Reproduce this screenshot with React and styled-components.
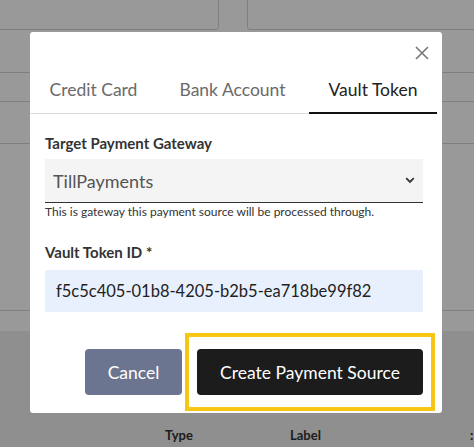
import React from 'react'
import styled, { createGlobalStyle } from 'styled-components'

const GlobalStyle = createGlobalStyle`
  html, body {
    margin: 0;
    padding: 0;
    background: #fff;
    font-family: Lato, "Open Sans", sans-serif;
    overflow: hidden;
  }
`

// Page behind the dialog
const Page = styled.div`
  position: relative;
  width: 474px;
  height: 447px;
  overflow: hidden;
  background: #fff;
`

const FieldRow = styled.div`
  display: grid;
  grid-template-columns: 229px 243px;
  gap: 28px;
  margin: -10px 0 0 -10px;
`

const GhostInput = styled.div`
  height: 38px;
  border: 1px solid #d4d4d4;
  border-radius: 3px;
`

const Line = styled.div`
  height: ${p => p.h}px;
  border-bottom: 1px solid #d6d6d6;
  box-sizing: border-box;
`

const HeaderBand = styled.div`
  margin-top: 20px;
  height: 200px;
  background: #eeeeee;
  display: flex;
  padding-top: 96px;
  box-sizing: border-box;
  font-size: 13px;
  font-weight: 700;
  color: #333;
`

const HeadCell = styled.span`
  width: ${p => p.w}px;
  flex: none;
`

const Overlay = styled.div`
  position: absolute;
  inset: 0;
  background: rgba(0, 0, 0, 0.4);
`

const Modal = styled.div`
  position: absolute;
  left: 30px;
  top: 32px;
  width: 412px;
  height: 381px;
  background: #fff;
  border-radius: 3px;
  display: flex;
  flex-direction: column;
`

const CloseRow = styled.div`
  height: 42px;
  display: flex;
  justify-content: flex-end;
  align-items: center;
  padding: 0 12px 0 0;
`

const CloseBtn = styled.button`
  border: 0;
  background: none;
  padding: 0;
  width: 16px;
  height: 16px;
  display: flex;
  align-items: center;
  justify-content: center;
  svg { display: block; }
`

const TabList = styled.div`
  display: flex;
  gap: 1px;
  margin-right: 5px;
  border-bottom: 1px solid #dcdcdc;
`

const Tab = styled.div`
  flex: none;
  width: ${p => p.w}px;
  text-align: center;
  white-space: nowrap;
  padding: 4px 0 10px;
  line-height: 24px;
  font-size: 17.5px;
  color: ${p => (p.active ? '#222' : '#6a6a6a')};
  border-bottom: ${p => (p.active ? '2px solid #111' : '2px solid transparent')};
  margin-bottom: -1px;
  margin-left: ${p => (p.push ? 'auto' : '0')};
`

const Form = styled.div`
  padding: 18px 19px 0 15px;
  display: flex;
  flex-direction: column;
`

const Label = styled.label`
  font-size: 15px;
  font-weight: 700;
  color: #333;
  line-height: 22px;
  margin: ${p => p.m || '0'};
`

const Select = styled.div`
  height: 44px;
  box-sizing: border-box;
  background: #f4f4f4;
  border-bottom: 1px solid #333;
  display: flex;
  align-items: center;
  justify-content: space-between;
  padding: 0 8px 0 8px;
  font-size: 18px;
  color: #555;
`

const Help = styled.div`
  font-size: 12px;
  line-height: 18px;
  color: #333;
`

const Input = styled.div`
  height: 42px;
  background: #e8f0fe;
  display: flex;
  align-items: center;
  padding-left: 11px;
  font-size: 16.5px;
  color: #222;
`

const Actions = styled.div`
  margin-top: 37px;
  display: flex;
  justify-content: flex-end;
  gap: 15px;
`

const Button = styled.button`
  height: 46px;
  width: ${p => p.w}px;
  border: 0;
  border-radius: 4px;
  background: ${p => p.bg};
  color: #fff;
  font-family: inherit;
  font-size: 17.5px;
  position: relative;
`

const Highlight = styled.span`
  position: absolute;
  left: -12px;
  right: -12px;
  top: -16px;
  bottom: -16px;
  border: 4px solid #f7c514;
  pointer-events: none;
`

const App = () => (
  <>
    <GlobalStyle />
    <Page>
      <FieldRow>
        <GhostInput />
        <GhostInput />
      </FieldRow>
      <Line h={43} />
      <Line h={29} />
      <Line h={42} />
      <Line h={167} />
      <HeaderBand>
        <HeadCell w={165} />
        <HeadCell w={125}>Type</HeadCell>
        <HeadCell w={180}>Label</HeadCell>
        <HeadCell w={20}>:</HeadCell>
      </HeaderBand>
      <Overlay />
      <Modal>
        <CloseRow>
          <CloseBtn aria-label="Close">
            <svg width="14" height="14" viewBox="0 0 14 14">
              <path d="M1 1L13 13M13 1L1 13" stroke="#777" strokeWidth="1.6" />
            </svg>
          </CloseBtn>
        </CloseRow>
        <TabList>
          <Tab w={127}>Credit Card</Tab>
          <Tab w={149}>Bank Account</Tab>
          <Tab w={128} active push>Vault Token</Tab>
        </TabList>
        <Form>
          <Label m="0 0 5px">Target Payment Gateway</Label>
          <Select>
            <span>TillPayments</span>
            <svg width="10" height="7" viewBox="0 0 10 7">
              <path d="M1.2 1.2L5 5L8.8 1.2" stroke="#333" strokeWidth="1.8" fill="none" />
            </svg>
          </Select>
          <Help>This is gateway this payment source will be processed through.</Help>
          <Label m="20px 0 7px">Vault Token ID *</Label>
          <Input>f5c5c405-01b8-4205-b2b5-ea718be99f82</Input>
          <Actions>
            <Button w={97} bg="#6b7590">Cancel</Button>
            <Button w={226} bg="#1c1c1c">
              Create Payment Source
              <Highlight />
            </Button>
          </Actions>
        </Form>
      </Modal>
    </Page>
  </>
)

export default App
